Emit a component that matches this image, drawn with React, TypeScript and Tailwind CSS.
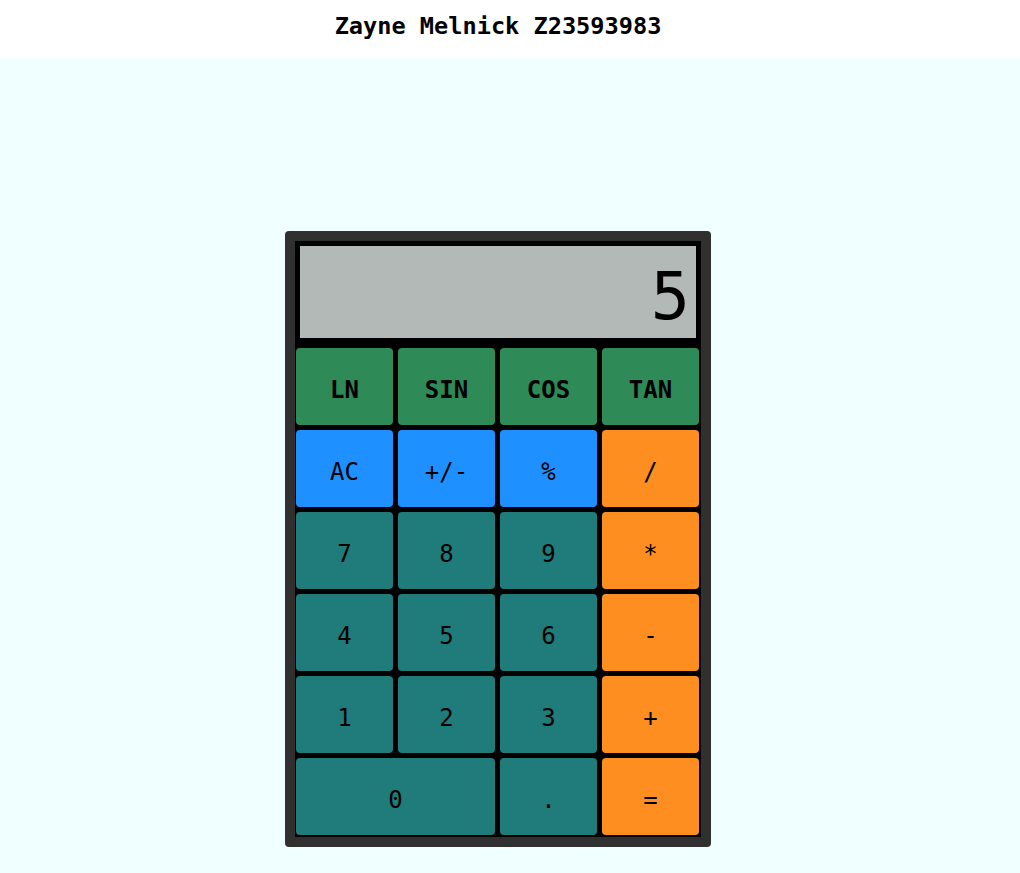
import React from "react";

const mono = { fontFamily: '"DejaVu Sans Mono", monospace' };

type Btn = { label: string; cls: string; span?: boolean; bold?: boolean };

const GREEN = "bg-[#2e8b57]";
const BLUE = "bg-[#1e90ff]";
const ORANGE = "bg-[#ff8e20]";
const TEAL = "bg-[#207c7a]";

const buttons: Btn[] = [
  { label: "LN", cls: GREEN, bold: true },
  { label: "SIN", cls: GREEN, bold: true },
  { label: "COS", cls: GREEN, bold: true },
  { label: "TAN", cls: GREEN, bold: true },
  { label: "AC", cls: BLUE },
  { label: "+/-", cls: BLUE },
  { label: "%", cls: BLUE },
  { label: "/", cls: ORANGE },
  { label: "7", cls: TEAL },
  { label: "8", cls: TEAL },
  { label: "9", cls: TEAL },
  { label: "*", cls: ORANGE },
  { label: "4", cls: TEAL },
  { label: "5", cls: TEAL },
  { label: "6", cls: TEAL },
  { label: "-", cls: ORANGE },
  { label: "1", cls: TEAL },
  { label: "2", cls: TEAL },
  { label: "3", cls: TEAL },
  { label: "+", cls: ORANGE },
  { label: "0", cls: TEAL, span: true },
  { label: ".", cls: TEAL },
  { label: "=", cls: ORANGE },
];

export default function App() {
  return (
    <div className="min-h-screen bg-[#f0ffff]" style={mono}>
      <div className="h-[58px] bg-white flex justify-center pr-[24px] pt-[12px]">
        <h1 className="text-[23.6px] leading-[28px] font-bold text-black">Zayne Melnick Z23593983</h1>
      </div>
      <div className="flex justify-center pr-[24px] pt-[173px] pb-[26px]">
        <div className="w-[426px] p-[10px] bg-[#303030] rounded-[4px]">
          <div className="bg-black">
            <div className="h-[102px] border-[5px] border-black bg-[#b3b9b6] flex items-center justify-end pr-[6px] pt-[8px]">
              <span className="text-[65px] leading-none text-black">5</span>
            </div>
            <div className="mt-[5px] pl-[1px] pr-[2px] pb-[2px] grid grid-cols-4 gap-[5px]">
              {buttons.map((b) => (
                <button
                  key={b.label}
                  className={`${b.cls} ${b.span ? "col-span-2" : ""} ${b.bold ? "font-bold" : "font-normal"} h-[77px] rounded-[4px] text-[24px] text-black flex items-center justify-center pt-[6px]`}
                  style={mono}
                >
                  {b.label}
                </button>
              ))}
            </div>
          </div>
        </div>
      </div>
    </div>
  );
}
